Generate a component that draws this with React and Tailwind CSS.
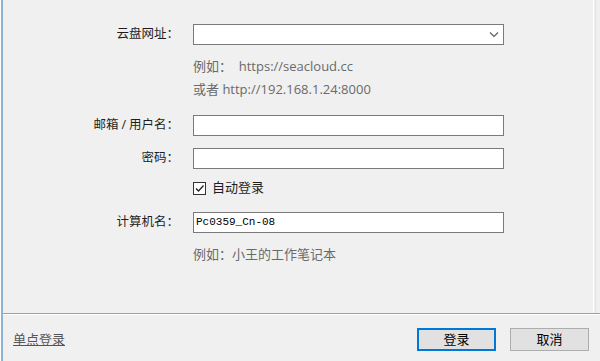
import React from "react";

const cjk = { fontFamily: '"Segoe UI", "Open Sans", "Noto Sans CJK SC", sans-serif' };

const Label = ({ children }) => (
  <div className="w-[193px] pr-[14px] flex justify-end items-center text-[12.5px] text-[#1e1e1e]" style={cjk}>
    {children}
  </div>
);

const Field = ({ children }) => (
  <div className="w-[311px] h-[21px] bg-white border border-[#7a7a7a] flex items-center relative">
    {children}
  </div>
);

export default function App() {
  return (
    <div className="w-[600px] h-[361px] bg-white pl-px overflow-hidden">
      <div className="h-full bg-[#f0f0f0] border-l-2 border-[#8db3d2] flex flex-col">
        <div className="flex-1 flex pr-[4px]">
          <div className="flex-1 pt-[24px] flex flex-col">
            <div className="flex h-[21px] -ml-[3px]">
              <Label>云盘网址：</Label>
              <Field>
                <svg className="absolute right-[4px] top-[6px]" width="10" height="7" viewBox="0 0 10 7">
                  <path d="M1 1.5 L5 5.5 L9 1.5" stroke="#606060" strokeWidth="1.2" fill="none" />
                </svg>
              </Field>
            </div>
            <div className="ml-[190px] mt-[10px] h-[23px] flex items-center text-[13px] text-[#6a6a6a]" style={cjk}>
              例如：&nbsp;&nbsp;https://seacloud.cc
            </div>
            <div className="ml-[190px] h-[23px] flex items-center text-[13px] text-[#6a6a6a]" style={cjk}>
              或者 http://192.168.1.24:8000
            </div>
            <div className="flex h-[21px] mt-[14px] -ml-[3px]">
              <Label>
                邮箱<span className="mx-[3px]">/</span>用户名：
              </Label>
              <Field />
            </div>
            <div className="flex h-[21px] mt-[12px] -ml-[3px]">
              <Label>密码：</Label>
              <Field />
            </div>
            <div className="ml-[190px] mt-[9px] h-[20px] flex items-center gap-[6px] text-[13px] text-[#1e1e1e]" style={cjk}>
              <div className="w-[13px] h-[13px] border border-[#333] bg-white flex items-center justify-center">
                <svg width="11" height="11" viewBox="0 0 11 11">
                  <path d="M2 5.5 L4.5 8 L9.5 2.5" stroke="#222" strokeWidth="1.3" fill="none" />
                </svg>
              </div>
              <span>自动登录</span>
            </div>
            <div className="flex h-[21px] mt-[14px] -ml-[3px]">
              <Label>计算机名：</Label>
              <Field>
                <span className="pl-[2px] text-[11px] text-black" style={{ fontFamily: '"Liberation Mono", monospace' }}>
                  Pc0359_Cn-08
                </span>
              </Field>
            </div>
            <div className="ml-[190px] mt-[12px] h-[20px] flex items-center text-[13px] text-[#6a6a6a]" style={cjk}>
              例如：小王的工作笔记本
            </div>
          </div>
          <div className="w-[3px] flex">
            <div className="w-px bg-white" />
            <div className="w-px" />
            <div className="w-px bg-[#e0e0e0]" />
          </div>
        </div>
        <div className="h-px bg-[#a0a0a0]" />
        <div className="h-px bg-white" />
        <div className="h-[46px] flex items-start pt-[13px] pl-[10px] pr-[11px]">
          <a className="mt-[2px] text-[13px] text-[#555] underline" style={cjk}>
            单点登录
          </a>
          <div className="flex-1" />
          <button className="w-[79px] h-[23px] bg-[#e1e1e1] border-2 border-[#0078d7] text-[13px] text-black flex items-center justify-center" style={cjk}>
            登录
          </button>
          <button className="ml-[14px] w-[79px] h-[23px] bg-[#e1e1e1] border border-[#adadad] text-[13px] text-black flex items-center justify-center" style={cjk}>
            取消
          </button>
        </div>
      </div>
    </div>
  );
}
